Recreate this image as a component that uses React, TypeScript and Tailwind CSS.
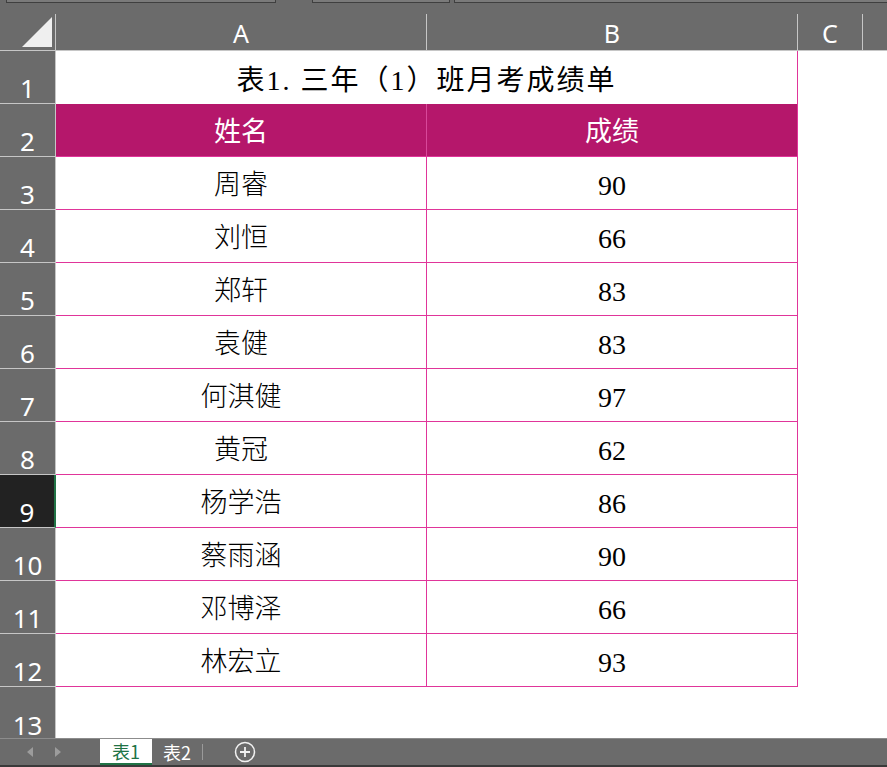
import React from 'react';

const rows: [string, string][] = [
  ['周睿', '90'],
  ['刘恒', '66'],
  ['郑轩', '83'],
  ['袁健', '83'],
  ['何淇健', '97'],
  ['黄冠', '62'],
  ['杨学浩', '86'],
  ['蔡雨涵', '90'],
  ['邓博泽', '66'],
  ['林宏立', '93'],
];

const hdrFont = { fontFamily: '"Noto Sans", "Open Sans", sans-serif' };
const cellFont = { fontFamily: '"Liberation Serif", "Noto Sans CJK SC", serif' };

const RowHead: React.FC<{ n: number; active?: boolean }> = ({ n, active }) => (
  <div
    className={`w-[56px] shrink-0 flex items-end justify-center pb-[2px] border-b border-r border-[#c6c6c6] text-[26px] leading-none ${
      active ? 'bg-[#222222] text-white border-r-[#217346] border-r-2' : 'text-white'
    }`}
    style={hdrFont}
  >
    {n}
  </div>
);

export default function App() {
  return (
    <div className="w-[887px] h-[767px] bg-[#6b6b6b] overflow-hidden flex flex-col select-none">
      {/* top strip (formula bar edges) */}
      <div className="h-[14px] flex items-start">
        <div className="ml-[6px] w-[270px] h-[3px] bg-[#7a7a7a] border-x border-b border-[#3f3f3f]" />
        <div className="ml-[36px] w-[138px] h-[3px] bg-[#7a7a7a] border-x border-b border-[#3f3f3f]" />
        <div className="ml-[4px] flex-1 h-[3px] bg-[#7a7a7a] border-l border-b border-[#3f3f3f]" />
      </div>

      {/* column headers */}
      <div className="h-[37px] flex border-b border-[#c6c6c6] text-white text-[25px] leading-none" style={hdrFont}>
        <div className="w-[56px] shrink-0 border-r border-[#c6c6c6] flex items-end justify-end pr-[3px] pb-[3px]">
          <svg width="30" height="30" viewBox="0 0 30 30">
            <polygon points="0,30 30,30 30,0" fill="#efefef" />
          </svg>
        </div>
        <div className="w-[371px] shrink-0 border-r border-[#c6c6c6] flex items-center justify-center pt-[2px]">A</div>
        <div className="w-[371px] shrink-0 border-r border-[#c6c6c6] flex items-center justify-center pt-[2px]">B</div>
        <div className="w-[65px] shrink-0 border-r border-[#c6c6c6] flex items-center justify-center pt-[2px]">C</div>
        <div className="flex-1" />
      </div>

      {/* row 1: title */}
      <div className="h-[53px] flex">
        <RowHead n={1} />
        <div className="w-[742px] shrink-0 bg-white border-r border-[#e0359a] flex items-center justify-center pt-[6px] text-[28px] leading-none tracking-[2px] text-black" style={cellFont}>
          表1. 三年（1）班月考成绩单
        </div>
        <div className="flex-1 bg-white" />
      </div>

      {/* row 2: header */}
      <div className="h-[53px] flex">
        <RowHead n={2} />
        <div className="w-[371px] shrink-0 bg-[#b5176b] border-r border-b border-r-[#d8479a] border-b-[#e0359a] flex items-center justify-center pt-[5px] text-[27px] leading-none text-white" style={cellFont}>
          姓名
        </div>
        <div className="w-[371px] shrink-0 bg-[#b5176b] border-r border-b border-[#e0359a] flex items-center justify-center pt-[5px] text-[27px] leading-none text-white" style={cellFont}>
          成绩
        </div>
        <div className="flex-1 bg-white" />
      </div>

      {rows.map(([name, score], i) => (
        <div key={i} className="h-[53px] flex">
          <RowHead n={i + 3} active={i + 3 === 9} />
          <div className="w-[371px] shrink-0 bg-white border-r border-b border-[#e0359a] flex items-center justify-center pt-[5px] text-[27px] leading-none font-light text-black" style={cellFont}>
            {name}
          </div>
          <div className="w-[371px] shrink-0 bg-white border-r border-b border-[#e0359a] flex items-center justify-center pt-[5px] text-[28px] leading-none text-black" style={cellFont}>
            {score}
          </div>
          <div className="flex-1 bg-white" />
        </div>
      ))}

      {/* row 13 */}
      <div className="h-[51px] flex">
        <div className="w-[56px] shrink-0 flex items-end justify-center border-r border-[#c6c6c6] text-[26px] leading-none text-white" style={hdrFont}>
          13
        </div>
        <div className="flex-1 bg-white" />
      </div>

      {/* sheet tabs bar */}
      <div className="flex-1 flex border-t border-[#8c8c8c] border-b-2 border-b-[#3a3a3a] bg-[#6b6b6b]">
        <div className="w-[100px] shrink-0 flex items-center">
          <svg className="ml-[27px]" width="6" height="10" viewBox="0 0 6 10">
            <polygon points="6,0 0,5 6,10" fill="#9c9c9c" />
          </svg>
          <svg className="ml-[22px]" width="6" height="10" viewBox="0 0 6 10">
            <polygon points="0,0 6,5 0,10" fill="#9c9c9c" />
          </svg>
        </div>
        <div className="w-[52px] shrink-0 bg-white border-b-2 border-[#217346] flex items-center justify-center text-[18px] leading-none text-[#217346]" style={{ fontFamily: '"Noto Sans CJK SC", "Noto Sans", sans-serif' }}>
          表1
        </div>
        <div className="w-[50px] shrink-0 flex items-center justify-center text-[18px] leading-none text-white" style={{ fontFamily: '"Noto Sans CJK SC", "Noto Sans", sans-serif' }}>
          表2
        </div>
        <div className="w-px h-[16px] self-center bg-[#9a9a9a]" />
        <div className="ml-[31px] flex items-center">
          <svg width="22" height="22" viewBox="0 0 22 22">
            <circle cx="11" cy="11" r="9.5" fill="none" stroke="#f2f2f2" strokeWidth="1.5" />
            <path d="M11 6v10M6 11h10" stroke="#f2f2f2" strokeWidth="1.8" />
          </svg>
        </div>
      </div>
    </div>
  );
}
